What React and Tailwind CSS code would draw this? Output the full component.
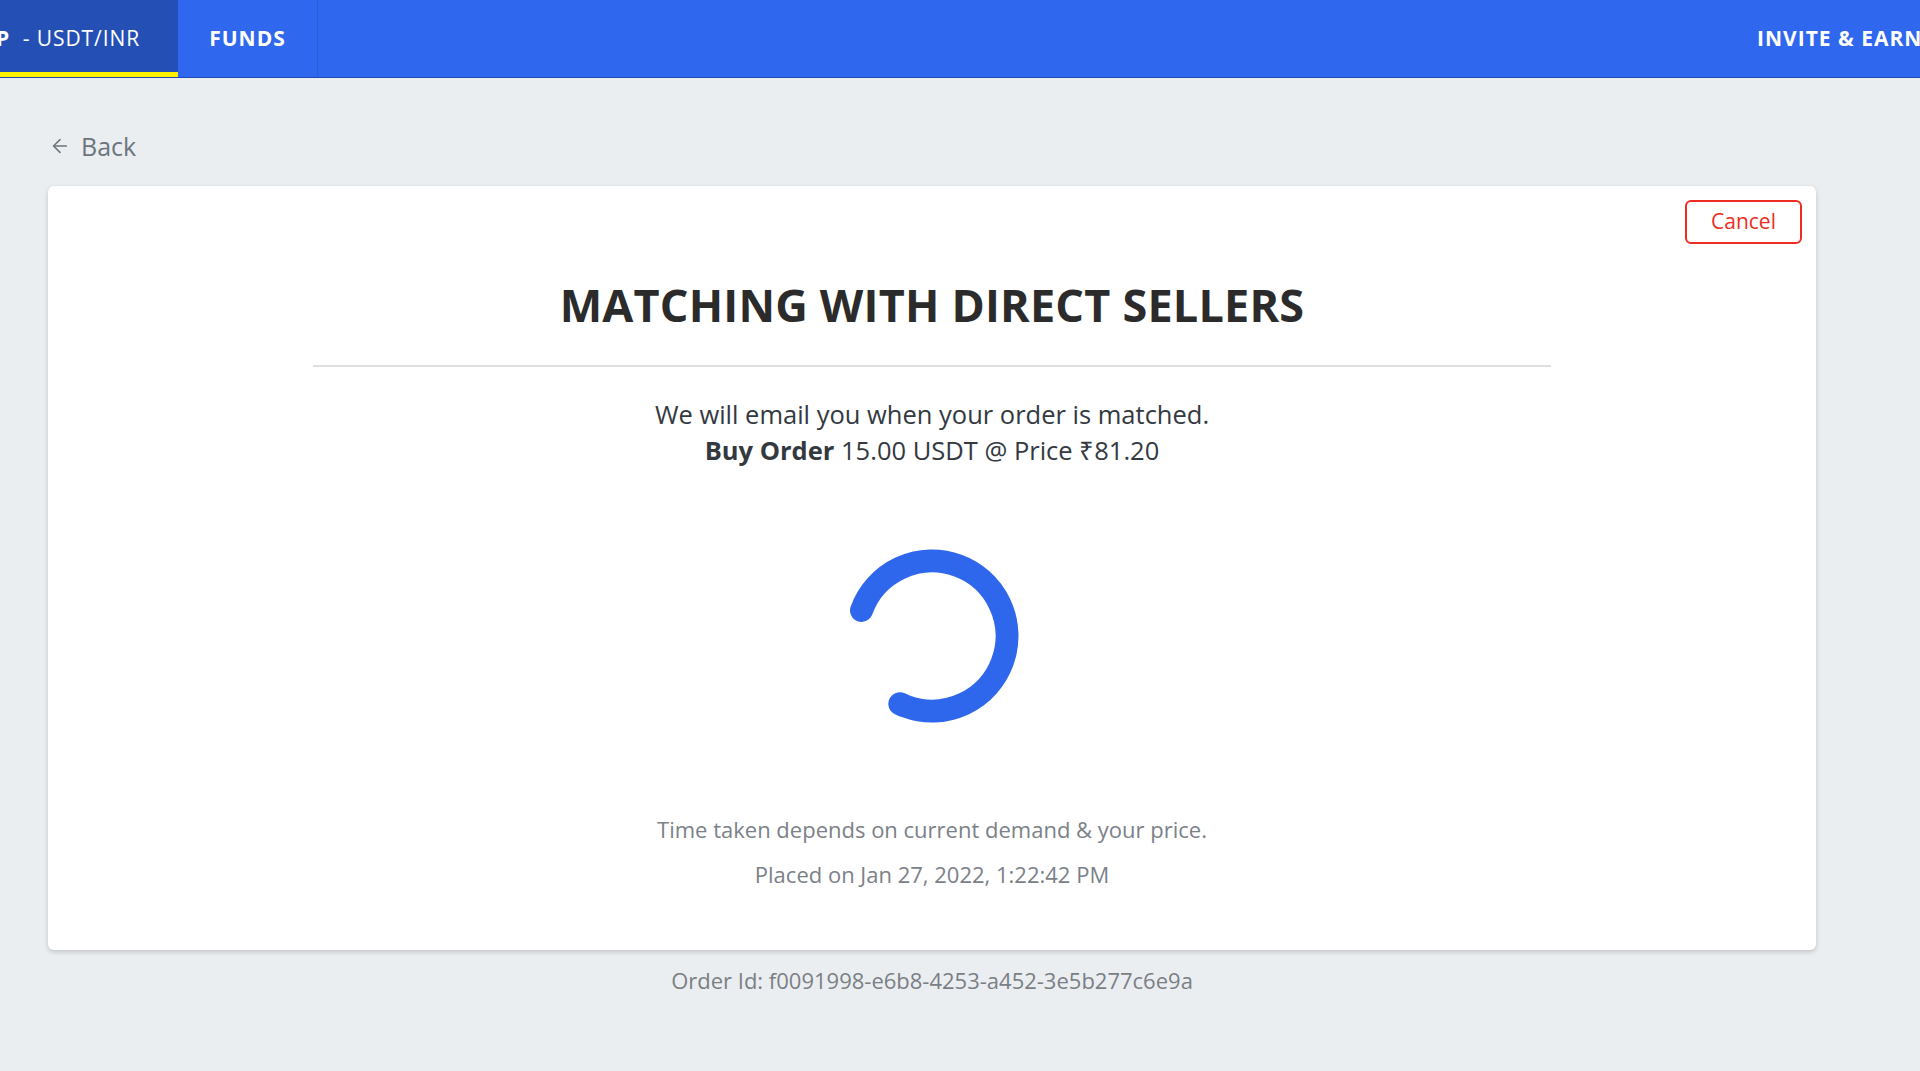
import { ArrowLeft } from 'lucide-react'

function Spinner() {
  return (
    <svg width="184" height="184" viewBox="0 0 184 184">
      <circle
        cx="92"
        cy="92"
        r="75"
        fill="none"
        stroke="#2f67ec"
        strokeWidth="23"
        strokeLinecap="round"
        strokeDasharray="360 472"
        transform="rotate(200 92 92)"
      />
    </svg>
  )
}

export default function App() {
  return (
    <div className="min-h-[1071px] bg-[#ebeef1] font-['Open_Sans',sans-serif]">
      <header className="flex h-[78px] overflow-hidden bg-[#2f67ee] border-b border-[#1f48b2] text-white text-[21px]">
        <div className="flex w-[178px] shrink-0 items-center justify-end overflow-hidden whitespace-nowrap bg-[#2450b6] border-b-[5px] border-[#fff200] pr-[38px] pt-[5px] tracking-[0.9px]">
          <span>
            <b className="font-bold">P2P</b>&nbsp; - USDT/INR
          </span>
        </div>
        <div className="flex w-[140px] shrink-0 items-center justify-center border-r border-[#2a5cd8] font-bold tracking-[1px]">
          FUNDS
        </div>
        <div className="flex-1"></div>
        <div className="flex w-[163px] shrink-0 items-center whitespace-nowrap font-bold tracking-[1px]">
          INVITE &amp; EARN
        </div>
      </header>

      <div className="ml-[48px] w-[1768px]">
        <div className="mt-[52px] flex items-center gap-[10px] pl-[1px] text-[25px] leading-8 text-[#6c757d]">
          <ArrowLeft size={22} strokeWidth={1.7} />
          <span>Back</span>
        </div>

        <div className="relative mt-6 rounded-md bg-white pt-[89px] pb-[61px] shadow-[0_2px_5px_rgba(0,0,0,0.18)]">
          <button className="absolute top-[14px] right-[14px] h-[44px] w-[117px] rounded-md border-2 border-[#ee2c22] text-[21px] text-[#ee2c22]">
            Cancel
          </button>

          <h1 className="text-center text-[45px] leading-[60px] font-bold tracking-[0.2px] text-[#2b2b2b]">
            MATCHING WITH DIRECT SELLERS
          </h1>
          <div className="mx-auto mt-[30px] h-[2px] w-[70%] bg-[#e0e0e0]"></div>

          <div className="mt-[29px] text-center text-[25.5px] leading-[37px] text-[#33393f]">
            <p>We will email you when your order is matched.</p>
            <p className="-mt-px">
              <span className="font-bold">Buy Order</span> 15.00 USDT @ Price ₹81.20
            </p>
          </div>

          <div className="mt-[75px] flex justify-center">
            <Spinner />
          </div>

          <div className="mt-[86px] text-center text-[22px] leading-[30px] text-[#7b8188]">
            <p>Time taken depends on current demand &amp; your price.</p>
            <p className="mt-[15px]">Placed on Jan 27, 2022, 1:22:42 PM</p>
          </div>
        </div>

        <p className="mt-[15px] text-center text-[22px] leading-[30px] text-[#7a7f85]">
          Order Id: f0091998-e6b8-4253-a452-3e5b277c6e9a
        </p>
      </div>
    </div>
  )
}
